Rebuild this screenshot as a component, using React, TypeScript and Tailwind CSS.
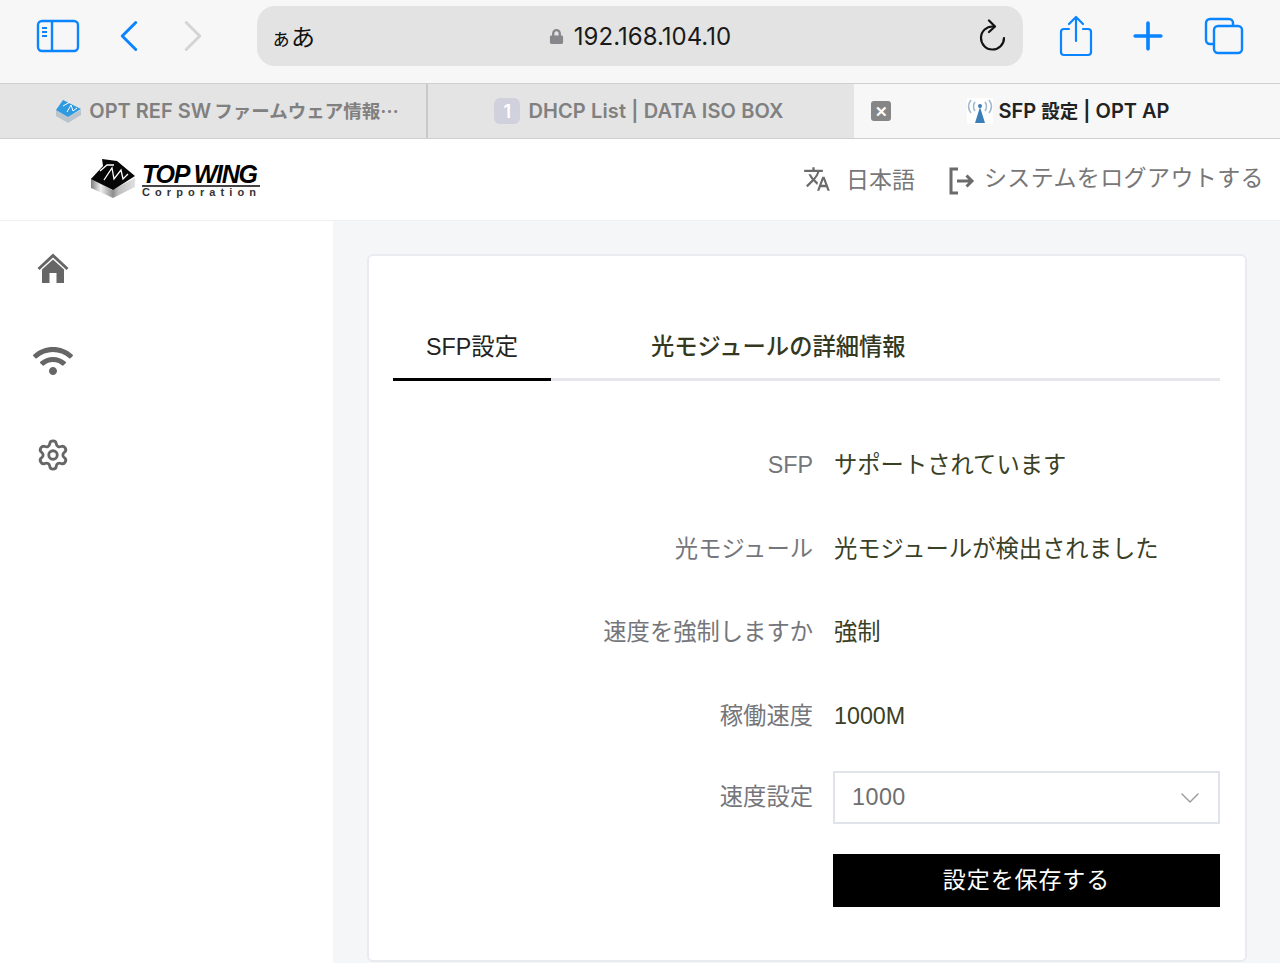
import { ChevronLeft, ChevronRight, Plus, Settings, ChevronDown } from 'lucide-react'
import { MdTranslate } from 'react-icons/md'
import { FaWifi, FaLock } from 'react-icons/fa'

const UI_FONT = "font-['Inter','Noto_Sans_CJK_JP',sans-serif]"
const PAGE_FONT = "font-['Liberation_Sans','Noto_Sans_CJK_JP',sans-serif]"

const ROWS = [
  { label: 'SFP', value: 'サポートされています' },
  { label: '光モジュール', value: '光モジュールが検出されました' },
  { label: '速度を強制しますか', value: '強制' },
  { label: '稼働速度', value: '1000M' },
]

function TopwingMark({ className }: { className?: string }) {
  return (
    <svg viewBox="0 0 46 42" className={className}>
      <defs>
        <linearGradient id="side" x1="0" x2="1" y1="0" y2="0">
          <stop offset="0" stopColor="#7d7d7d" />
          <stop offset="0.22" stopColor="#f0f0f0" />
          <stop offset="0.5" stopColor="#8e8e8e" />
          <stop offset="0.62" stopColor="#bdbdbd" />
          <stop offset="1" stopColor="#e0e0e0" />
        </linearGradient>
      </defs>
      <path d="M1 21 L22 33 L45 21 L45 30 L23 41 L1 31 Z" fill="url(#side)" />
      <path d="M1 22 L13 9 L12 2 L27 4 L45 19 L23 33 Z" fill="#060606" />
      <path d="M10 14 L17 8 L24 8 M14 23 L22 11 L24 22 L31 13 L33 22 L38 17" stroke="#fff" strokeWidth="1.3" fill="none" />
    </svg>
  )
}

function SidebarToggle() {
  return (
    <svg width="44" height="34" viewBox="0 0 44 34" fill="none" stroke="#0a84ff" strokeWidth="2.4">
      <rect x="2" y="2" width="40" height="30" rx="4" />
      <path d="M16 2V32" />
      <path d="M6 9H11M6 13H11M6 17H11" strokeWidth="1.8" />
    </svg>
  )
}

function ShareIcon() {
  return (
    <svg width="34" height="42" viewBox="0 0 34 42" fill="none" stroke="#0a84ff" strokeWidth="2.2" strokeLinecap="round" strokeLinejoin="round">
      <path d="M10 14H5a3 3 0 0 0-3 3v20a3 3 0 0 0 3 3h24a3 3 0 0 0 3-3V17a3 3 0 0 0-3-3h-5" />
      <path d="M17 26V2M10 9l7-7 7 7" />
    </svg>
  )
}

function TabsIcon() {
  return (
    <svg width="40" height="38" viewBox="0 0 40 38" fill="none" stroke="#0a84ff" strokeWidth="2.4">
      <path d="M9 27H6a4 4 0 0 1-4-4V6a4 4 0 0 1 4-4h19a4 4 0 0 1 4 4v3" />
      <rect x="10" y="9" width="28" height="27" rx="4" />
    </svg>
  )
}

function ReloadIcon() {
  return (
    <svg width="28" height="32" viewBox="0 0 28 32" fill="none" stroke="#111" strokeWidth="2.2" strokeLinecap="round" strokeLinejoin="round">
      <path d="M15 7.5A11.5 11.5 0 1 0 26 19" />
      <path d="M11 1.5L17 7.5L11 13" />
    </svg>
  )
}

function AntennaIcon() {
  return (
    <svg width="26" height="26" viewBox="0 0 26 26" className="bg-white">
      <path d="M13 9 L18 25 H8 Z" fill="#3b7fb8" />
      <circle cx="13" cy="8" r="2" fill="#3b7fb8" />
      <g fill="none" stroke="#9fb8cc" strokeWidth="1.6">
        <path d="M8 4c-2 3-2 6 0 9M18 4c2 3 2 6 0 9" />
        <path d="M4 2c-3 4-3 9 0 13M22 2c3 4 3 9 0 13" />
      </g>
    </svg>
  )
}

function LogoutIcon() {
  return (
    <svg width="27" height="28" viewBox="0 0 27 28" fill="none" stroke="#6b6b6b" strokeWidth="3">
      <path d="M9 2H2V26H9" />
      <path d="M8 14H23M17.5 8.5L23 14L17.5 19.5" />
    </svg>
  )
}

function HomeIcon() {
  return (
    <svg width="32" height="32" viewBox="0 0 32 32" fill="#666">
      <path d="M16 1.5 L31.5 16 L29.5 18 L16 5.5 L2.5 18 L0.5 16 Z" />
      <path d="M16 7.5 L27 17.5 V31 H19.5 V21 H12.5 V31 H5 V17.5 Z" />
    </svg>
  )
}

function TopwingBlue() {
  return (
    <svg width="27" height="24" viewBox="0 0 27 24">
      <path d="M1 11 L13 18 L26 11 L26 16 L13 24 L1 17 Z" fill="#b9c4cc" />
      <path d="M1 11 L8 1 L26 10 L13 18 Z" fill="#2f9ae0" />
      <path d="M8 7 L15 3 M12 13 L16 6 L18 12 L22 9" stroke="#fff" strokeWidth="1" fill="none" />
    </svg>
  )
}

export default function App() {
  return (
    <div className={`h-[963px] w-[1280px] overflow-hidden flex flex-col bg-white ${PAGE_FONT}`}>
      {/* Safari toolbar */}
      <div className={`h-[83px] shrink-0 bg-[#f7f7f7] flex items-start ${UI_FONT}`}>
        <div className="w-[257px] h-[72px] flex items-center pl-[36px]">
          <SidebarToggle />
          <ChevronLeft size={54} strokeWidth={1.3} className="ml-[22px] text-[#0a84ff]" />
          <ChevronRight size={54} strokeWidth={1.3} className="ml-[10px] text-[#d4d4d4]" />
        </div>
        <div className="mt-[6px] w-[766px] h-[60px] rounded-[18px] bg-[#e3e3e3] relative flex items-center justify-center">
          <span className="absolute left-[14px] text-[24px] text-[#111] font-['Noto_Sans_CJK_JP']">
            <span className="text-[20px]">ぁ</span>あ
          </span>
          <FaLock size={15} className="text-[#86868b] mr-[10px]" />
          <span className="text-[24px] text-[#1a1a1a] mt-[1px]">192.168.104.10</span>
          <div className="absolute right-[17px] top-[13px]"><ReloadIcon /></div>
        </div>
        <div className="flex-1 h-[72px] flex items-center pl-[36px]">
          <ShareIcon />
          <Plus size={44} strokeWidth={2} className="ml-[33px] text-[#0a84ff]" />
          <div className="ml-[34px]"><TabsIcon /></div>
        </div>
      </div>

      {/* Safari tabs */}
      <div className={`h-[56px] shrink-0 flex border-y border-[#cfcfcf] text-[20px] font-semibold ${UI_FONT}`}>
        <div className="w-[428px] border-r-2 border-[#c9c9c9] bg-[#e4e4e4] flex items-center justify-center gap-[7px] text-[#808080] pl-[28px]">
          <TopwingBlue />
          <span>OPT REF SW <span className="text-[18.5px] -ml-[2px]">ファームウェア情報⋯</span></span>
        </div>
        <div className="w-[426px] bg-[#e4e4e4] flex items-center justify-center gap-[8px] text-[#808080] tracking-[0.12px] pr-[4px]">
          <span className="w-[26px] h-[26px] rounded-[6px] bg-[#d0d1dc] text-white text-[18px] flex items-center justify-center">1</span>
          <span>DHCP List | DATA ISO BOX</span>
        </div>
        <div className="flex-1 bg-[#f7f7f7] relative flex items-center justify-center gap-[6px] text-[#222] pl-[2px]">
          <span className="absolute left-[17px] w-[20px] h-[20px] rounded-[3px] bg-[#868686] text-white text-[15px] leading-none flex items-center justify-center">✕</span>
          <AntennaIcon />
          <span>SFP <span className="text-[18.5px]">設定</span> | OPT AP</span>
        </div>
      </div>

      {/* App header */}
      <div className="h-[82px] shrink-0 bg-white flex items-center justify-between pr-[16px] border-b border-[#f0f1f3]">
        <div className="pl-[90px] flex items-center gap-[6px] -mt-[4px]">
          <TopwingMark className="w-[46px] h-[42px]" />
          <div className="w-[118px] mt-[6px] flex flex-col font-['Liberation_Sans',sans-serif] text-black">
            <span className="text-[25px] leading-[22px] font-bold italic tracking-[-1.3px]">TOP WING</span>
            <span className="border-t-2 border-[#444] text-[11px] leading-[11px] font-bold tracking-[5.1px] text-[#333] whitespace-nowrap">Corporation</span>
          </div>
        </div>
        <div className="flex items-center text-[#777] text-[23px] leading-none">
          <MdTranslate size={28} className="text-[#6b6b6b] -mt-[2px]" />
          <span className="ml-[15px] mt-[2px]">日本語</span>
          <span className="ml-[34px] mt-[3px]"><LogoutIcon /></span>
          <span className="ml-[8px] -mt-[2px] tracking-[0.4px]">システムをログアウトする</span>
        </div>
      </div>

      <div className="flex-1 min-h-0 flex">
        {/* Sidebar */}
        <div className="w-[333px] shrink-0 bg-white flex flex-col items-start pl-[32px] pt-[29px] text-[#666]">
          <div className="w-[42px] h-[36px] flex items-center justify-center"><HomeIcon /></div>
          <div className="w-[42px] h-[36px] mt-[57px] flex items-center justify-center"><FaWifi size={40} /></div>
          <div className="w-[42px] h-[36px] mt-[58px] flex items-center justify-center"><Settings size={34} strokeWidth={2} /></div>
        </div>

        {/* Main */}
        <div className="flex-1 bg-[#f5f6f8] pl-[34px] pr-[33px] pt-[33px] pb-[1px] min-h-0">
          <div className="h-full bg-white border-2 border-[#e9ebf0] rounded-[6px] pl-[24px] pr-[25px] pt-[65px]">
            <div className="flex border-b-[3px] border-[#e6e6ec] h-[60px] text-[23.3px] text-[#222]">
              <div className="w-[158px] h-[60px] border-b-[3px] border-black text-center pt-[9px]">SFP設定</div>
              <div className="ml-[100px] pt-[9px] font-medium text-[#33381f]">光モジュールの詳細情報</div>
            </div>

            <div className="mt-[43px] flex flex-col">
              {ROWS.map((row) => (
                <div key={row.label} className="h-[83.5px] flex items-start text-[23.3px] leading-[83.5px]">
                  <div className="w-[420px] text-right text-[#75767b]">{row.label}</div>
                  <div className="ml-[21px] text-[#3a4025]">{row.value}</div>
                </div>
              ))}
              <div className="flex items-center h-[53px] mt-[13px] text-[23.3px]">
                <div className="w-[420px] text-right text-[#75767b]">速度設定</div>
                <div className="ml-[20px] flex-1 h-[53px] border-2 border-[#e1e3ea] flex items-center justify-between pl-[17px] pr-[12px] text-[#6e6e6e] tracking-[0.5px]">
                  <span>1000</span>
                  <ChevronDown size={32} strokeWidth={1} className="text-[#999]" />
                </div>
              </div>
              <div className="mt-[30px] pl-[440px]">
                <button className="w-full h-[53px] bg-black text-white text-[23px] tracking-[0.9px]">設定を保存する</button>
              </div>
            </div>
          </div>
        </div>
      </div>
    </div>
  )
}
